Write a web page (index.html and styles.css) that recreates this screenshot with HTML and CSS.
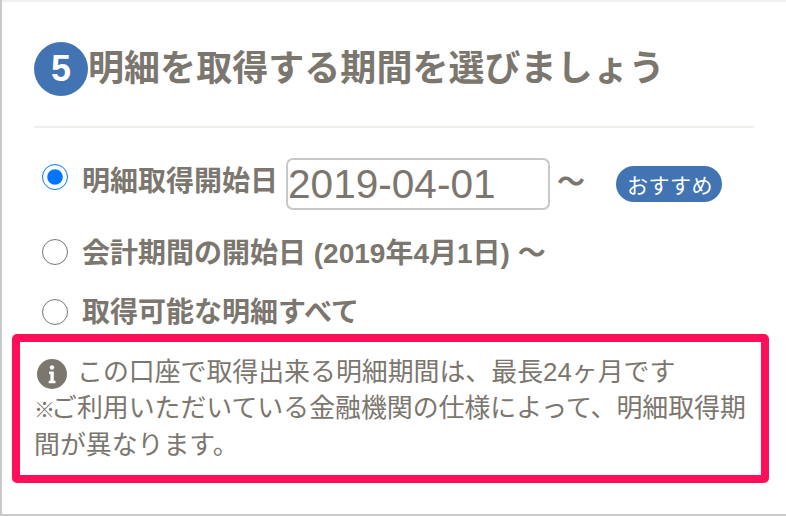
FILE: index.html
```html
<!DOCTYPE html>
<html lang="ja">
<head>
<meta charset="utf-8">
<title>明細を取得する期間</title>
<link rel="stylesheet" href="styles.css">
</head>
<body>
<main class="card">
  <section class="content">
    <h2 class="title"><span class="step">5</span><span class="title-text">明細を取得する期間を選びましょう</span></h2>
    <form class="options">
      <label class="option option-first">
        <input class="radio" type="radio" name="period" checked>
        <span class="label">明細取得開始日</span>
        <input class="date" type="text" value="2019-04-01">
        <span class="tilde">〜</span>
        <span class="badge">おすすめ</span>
      </label>
      <label class="option option-second">
        <input class="radio" type="radio" name="period">
        <span class="label">会計期間の開始日 (2019年4月1日) 〜</span>
      </label>
      <label class="option option-third">
        <input class="radio" type="radio" name="period">
        <span class="label">取得可能な明細すべて</span>
      </label>
    </form>
  </section>
  <aside class="notice">
    <p class="notice-lead">
      <svg class="info" viewBox="0 0 30 30" aria-hidden="true"><circle cx="15" cy="15" r="15" fill="#7b766e"/><circle cx="15" cy="8.500" r="2.200" fill="#fff"/><path d="M12 12.500h4.800v9.300h1.700v2.400h-6.800v-2.400h1.700v-6.900H12z" fill="#fff"/></svg>
      <span>この口座で取得出来る明細期間は、最長24ヶ月です</span>
    </p>
    <p class="notice-body"><span class="mark">※</span>ご利用いただいている金融機関の仕様によって、明細取得期間が異なります。</p>
  </aside>
</main>
</body>
</html>
```
FILE: styles.css
```css
* { box-sizing: border-box; }
html, body { margin: 0; height: 100%; }
body {
  width: 786px;
  height: 516px;
  overflow: hidden;
  background: #c9c9c9;
  padding: 2px 0 2px 2px;
  font-family: "Liberation Sans", "Noto Sans CJK JP", sans-serif;
  color: #7b766e;
}
.card {
  height: 512px;
  background: #fff;
  padding-left: 10px;
  box-shadow: 0 -2px 0 #f0f0ee;
}
.content {
  padding-left: 22px;
  width: 742px;
}
.title {
  display: flex;
  align-items: flex-start;
  margin: 0;
  padding-top: 40px;
  height: 126px;
  border-bottom: 2px solid #eeeeea;
  font-size: 36px;
  font-weight: 700;
  letter-spacing: 0.05px;
  line-height: 54px;
}
.step {
  flex: none;
  width: 54px;
  height: 54px;
  border-radius: 50%;
  background: #4274b3;
  color: #fff;
  font-size: 36px;
  letter-spacing: 0;
  display: flex;
  align-items: center;
  justify-content: center;
}
.title-text { margin-left: 0; white-space: nowrap; }
.options { display: block; }
.option { display: flex; align-items: center; }
.option-first { margin-top: 30px; height: 52px; }
.option-second { margin-top: 21px; height: 42px; }
.option-third { margin-top: 18px; height: 42px; }
.radio {
  width: 26px;
  height: 26px;
  margin: 0 0 0 8px;
  flex: none;
  position: relative;
  top: -7px;
}
.option-second .radio, .option-third .radio { top: 0; }
.label {
  margin-left: 14px;
  font-size: 28px;
  font-weight: 700;
  white-space: nowrap;
  position: relative;
}
.option-first .label { top: -5px; }
.option-second .label { top: -1px; }
.option-third .label { top: -2px; }
.date {
  width: 264px;
  height: 52px;
  margin-left: 8px;
  padding: 0;
  border: 2px solid #c8c8c8;
  border-radius: 7px;
  background: #fff;
  font: 400 40.6px "Liberation Sans", sans-serif;
  color: #7b766e;
  outline: none;
}
.tilde {
  margin-left: 7px;
  font-size: 28px;
  font-weight: 700;
  position: relative;
  top: -4px;
}
.badge {
  margin-left: 31px;
  width: 106px;
  height: 36px;
  border-radius: 18px;
  background: #4274b3;
  color: #fff;
  font-size: 21px;
  letter-spacing: 0.5px;
  padding-left: 2px;
  display: flex;
  align-items: center;
  justify-content: center;
  white-space: nowrap;
}
.notice {
  margin-top: 1px;
  width: 757px;
  height: 149px;
  border: 8px solid #ff0f5a;
  border-radius: 5px;
  padding: 12px 6px 0 14px;
  font-size: 25.9px;
  line-height: 36px;
}
.notice p { margin: 0; }
.notice-lead { display: flex; align-items: center; padding-left: 3px; }
.info { width: 30px; height: 30px; flex: none; margin: 4px 10px 0 0; }
.notice-body { margin-top: 2px; line-height: 37px; }
.mark { font-size: 21px; font-weight: 700; letter-spacing: -4px; line-height: 1; }
```
